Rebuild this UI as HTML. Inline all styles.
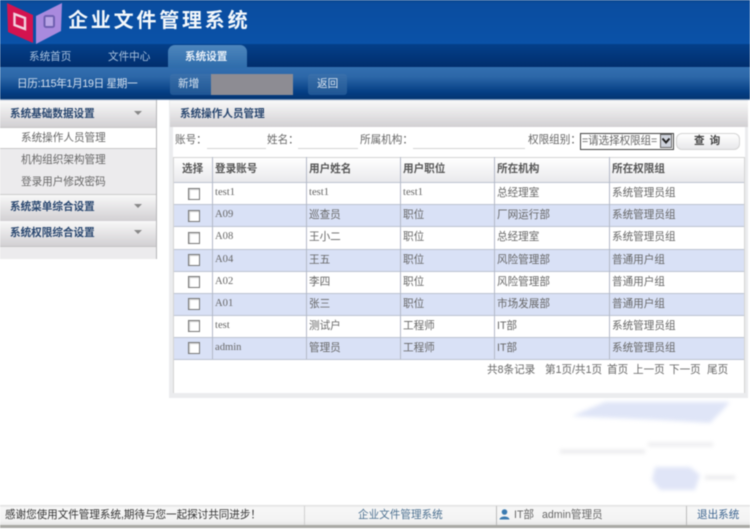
<!DOCTYPE html>
<html lang="zh">
<head>
<meta charset="utf-8">
<style>
html,body{margin:0;padding:0;background:#fff}
#p{position:relative;width:750px;height:530px;overflow:hidden;background:#fff;font-family:"Liberation Sans","Noto Sans CJK SC",sans-serif;font-size:10.6px;color:#666;filter:blur(.5px)}
#p div{position:absolute;white-space:nowrap}
.t{line-height:16px}
.s{font-family:"Liberation Serif","Noto Sans CJK SC",serif}
.hd{background:linear-gradient(#f8f8f8,#d2d0d3);}
.g{color:#28466f;font-weight:bold}
.cb{width:10px;height:10px;border:1px solid #777;background:#fff;box-shadow:inset 1px 1px 1px #ccc}
.r{left:174px;width:571px;height:22px}
.b{background:#d9e1f6}
.line{background:#bcc3d1;height:1px;left:174px;width:571px}
.vl{background:#b4b9c8;width:1px;top:157px;height:202px}
.h{color:#555;font-weight:bold}
</style>
</head>
<body>
<div id="p">
<!-- top header -->
<div style="left:0;top:0;width:750px;height:44px;background:linear-gradient(#0b478f 0,#0a4da0 8%,#0a52a8 100%)"></div>
<div style="left:0;top:44px;width:750px;height:24px;background:linear-gradient(#04408a,#012d6c)"></div>
<div style="left:0;top:67px;width:750px;height:33px;background:linear-gradient(#336fb0 0,#2c67a8 30%,#053f85 75%,#03336f 100%)"></div>
<div style="left:0;top:99px;width:750px;height:1px;background:#6b8bb3"></div>
<svg style="position:absolute;left:0;top:0" width="70" height="46" viewBox="0 0 70 46">
<polygon points="7,3 33,15 33,43 8,32" fill="#d3134f"/>
<polygon points="36,16 62,3 61,31 36,44" fill="#a98ade"/>
<polygon points="14.5,14 25,18 25,29 14.5,25" fill="none" stroke="#f3d2df" stroke-width="2.4"/>
<rect x="44.500" y="16" width="9.500" height="11" rx="1.500" fill="#b9a5e6" stroke="#6f5fb0" stroke-width="2"/>
</svg>
<div class="t" style="left:68px;top:8px;font-size:20px;line-height:26px;letter-spacing:2.8px;color:#f4f8fb;font-weight:bold">企业文件管理系统</div>

<!-- nav tabs -->
<div class="t" style="left:29px;top:49px;color:#a9c2de">系统首页</div>
<div class="t" style="left:108px;top:49px;color:#a9c2de">文件中心</div>
<div style="left:168px;top:45px;width:79px;height:23px;border-radius:7px 7px 0 0;background:linear-gradient(#4e86bd,#2e6cab)"></div>
<div class="t" style="left:185px;top:49px;color:#e8f0f8;font-weight:bold">系统设置</div>

<!-- toolbar -->
<div class="t" style="left:17px;top:76px;color:#d5e1ef;letter-spacing:-.3px">日历:115年1月19日 星期一</div>
<div style="left:170px;top:74px;width:123px;height:21px;border-radius:3px;background:linear-gradient(#3a70ab,#1f5694)"></div>
<div class="t" style="left:178px;top:76px;color:#d9e4f0">新增</div>
<div style="left:211px;top:74px;width:82px;height:21px;background:#8d8c93"></div>
<div style="left:308px;top:74px;width:39px;height:21px;border-radius:3px;background:linear-gradient(#3a70ab,#1f5694)"></div>
<div class="t" style="left:317px;top:76px;color:#d9e4f0">返回</div>

<!-- left panel -->
<div style="left:0;top:100px;width:156px;height:159px;background:#ecebed;border-right:1px solid #b5b5b8"></div>
<div class="hd" style="left:0;top:101px;width:156px;height:26px;border-bottom:1px solid #c4c4c4"></div>
<div class="t g" style="left:10px;top:106px">系统基础数据设置</div>
<div style="left:134px;top:111px;width:0;height:0;border:4px solid transparent;border-top:4px solid #888"></div>
<div style="left:0;top:128px;width:156px;height:20px;background:#fff;border-bottom:1px solid #c8c8c8"></div>
<div class="t" style="left:21px;top:130px">系统操作人员管理</div>
<div class="t" style="left:21px;top:152px">机构组织架构管理</div>
<div class="t" style="left:21px;top:174px">登录用户修改密码</div>
<div class="hd" style="left:0;top:194px;width:156px;height:26px;border-top:1px solid #ccc"></div>
<div class="t g" style="left:10px;top:199px">系统菜单综合设置</div>
<div style="left:134px;top:204px;width:0;height:0;border:4px solid transparent;border-top:4px solid #888"></div>
<div class="hd" style="left:0;top:221px;width:156px;height:25px;border-bottom:1px solid #c4c4c4"></div>
<div class="t g" style="left:10px;top:225px">系统权限综合设置</div>
<div style="left:134px;top:230px;width:0;height:0;border:4px solid transparent;border-top:4px solid #888"></div>

<!-- right panel -->
<div style="left:169px;top:100px;width:579px;height:298px;background:#ebecee"></div>
<div class="hd" style="left:170px;top:101px;width:578px;height:26px"></div>
<div class="t g" style="left:180px;top:106px">系统操作人员管理</div>
<div style="left:173px;top:127px;width:572px;height:266px;background:#fff"></div>

<!-- search -->
<div class="t" style="left:175px;top:132px">账号：</div>
<div style="left:207px;top:148px;width:59px;height:1px;background:#d4d4d4"></div>
<div class="t" style="left:267px;top:132px">姓名：</div>
<div style="left:298px;top:148px;width:60px;height:1px;background:#d4d4d4"></div>
<div class="t" style="left:360px;top:132px">所属机构：</div>
<div style="left:413px;top:148px;width:112px;height:1px;background:#d4d4d4"></div>
<div class="t" style="left:528px;top:132px">权限组别：</div>
<div style="left:580px;top:133px;width:92px;height:15px;border:1px solid #444;background:#fff"></div>
<div class="t" style="left:582px;top:133px;letter-spacing:-.1px">=请选择权限组=</div>
<div style="left:660px;top:134px;width:12px;height:14px;background:#cfd3dc;border:1px solid #666;box-sizing:border-box"></div>
<svg style="position:absolute;left:661px;top:137px" width="10" height="8"><path d="M1.500 1.500L5 5.500L8.500 1.500" fill="none" stroke="#222" stroke-width="2"/></svg>
<div style="left:676px;top:133px;width:62px;height:15px;border:1px solid #d4d4d4;border-radius:6px;background:linear-gradient(#fff,#e8e8ea)"></div>
<div class="t" style="left:694px;top:133px;color:#444;letter-spacing:5px;font-weight:bold">查询</div>

<!-- table -->
<div class="hd" style="left:174px;top:158px;width:571px;height:24px;background:linear-gradient(#fff,#e9e9ec)"></div>
<div class="r b" style="top:205px"></div>
<div class="r b" style="top:250px"></div>
<div class="r b" style="top:294px"></div>
<div class="r b" style="top:338px"></div>
<div class="line" style="top:157px;background:#d4d4d4"></div>
<div class="line" style="top:182px"></div>
<div class="line" style="top:204px"></div>
<div class="line" style="top:226px"></div>
<div class="line" style="top:249px"></div>
<div class="line" style="top:271px"></div>
<div class="line" style="top:293px"></div>
<div class="line" style="top:315px"></div>
<div class="line" style="top:337px"></div>
<div class="line" style="top:359px"></div>
<div class="vl" style="left:173px;background:#d4d4d4;height:236px"></div>
<div class="vl" style="left:212px"></div>
<div class="vl" style="left:306px"></div>
<div class="vl" style="left:400px"></div>
<div class="vl" style="left:494px"></div>
<div class="vl" style="left:609px"></div>
<div class="vl" style="left:744px;background:#d4d4d4;height:236px"></div>

<div class="t h" style="left:182px;top:161px">选择</div>
<div class="t h" style="left:215px;top:161px">登录账号</div>
<div class="t h" style="left:309px;top:161px">用户姓名</div>
<div class="t h" style="left:403px;top:161px">用户职位</div>
<div class="t h" style="left:497px;top:161px">所在机构</div>
<div class="t h" style="left:612px;top:161px">所在权限组</div>

<div class="cb" style="left:188px;top:188px"></div><div class="t s" style="left:215px;top:185px">test1</div><div class="t s" style="left:309px;top:185px">test1</div><div class="t s" style="left:403px;top:185px">test1</div><div class="t" style="left:497px;top:185px">总经理室</div><div class="t" style="left:612px;top:185px">系统管理员组</div>
<div class="cb" style="left:188px;top:210px"></div><div class="t s" style="left:215px;top:207px">A09</div><div class="t" style="left:309px;top:207px">巡查员</div><div class="t" style="left:403px;top:207px">职位</div><div class="t" style="left:497px;top:207px">厂网运行部</div><div class="t" style="left:612px;top:207px">系统管理员组</div>
<div class="cb" style="left:188px;top:232px"></div><div class="t s" style="left:215px;top:229px">A08</div><div class="t" style="left:309px;top:229px">王小二</div><div class="t" style="left:403px;top:229px">职位</div><div class="t" style="left:497px;top:229px">总经理室</div><div class="t" style="left:612px;top:229px">系统管理员组</div>
<div class="cb" style="left:188px;top:254px"></div><div class="t s" style="left:215px;top:252px">A04</div><div class="t" style="left:309px;top:252px">王五</div><div class="t" style="left:403px;top:252px">职位</div><div class="t" style="left:497px;top:252px">风险管理部</div><div class="t" style="left:612px;top:252px">普通用户组</div>
<div class="cb" style="left:188px;top:276px"></div><div class="t s" style="left:215px;top:274px">A02</div><div class="t" style="left:309px;top:274px">李四</div><div class="t" style="left:403px;top:274px">职位</div><div class="t" style="left:497px;top:274px">风险管理部</div><div class="t" style="left:612px;top:274px">普通用户组</div>
<div class="cb" style="left:188px;top:298px"></div><div class="t s" style="left:215px;top:296px">A01</div><div class="t" style="left:309px;top:296px">张三</div><div class="t" style="left:403px;top:296px">职位</div><div class="t" style="left:497px;top:296px">市场发展部</div><div class="t" style="left:612px;top:296px">普通用户组</div>
<div class="cb" style="left:188px;top:320px"></div><div class="t s" style="left:215px;top:318px">test</div><div class="t" style="left:309px;top:318px">测试户</div><div class="t" style="left:403px;top:318px">工程师</div><div class="t" style="left:497px;top:318px">IT部</div><div class="t" style="left:612px;top:318px">系统管理员组</div>
<div class="cb" style="left:188px;top:342px"></div><div class="t s" style="left:215px;top:340px">admin</div><div class="t" style="left:309px;top:340px">管理员</div><div class="t" style="left:403px;top:340px">工程师</div><div class="t" style="left:497px;top:340px">IT部</div><div class="t" style="left:612px;top:340px">系统管理员组</div>

<div class="t" style="left:487px;top:362px">共8条记录</div>
<div class="t" style="left:545px;top:362px">第1页/共1页</div>
<div class="t" style="left:607px;top:362px">首页</div>
<div class="t" style="left:633px;top:362px">上一页</div>
<div class="t" style="left:669px;top:362px">下一页</div>
<div class="t" style="left:707px;top:362px">尾页</div>

<!-- smudges -->
<svg style="position:absolute;left:560px;top:395px;filter:blur(2px)" width="190" height="110">
<polygon points="12,21 45,7 170,7 160,18 150,28 100,25 30,22" fill="#dfe5f7"/>
<rect x="0" y="55" width="85" height="3" fill="#e4e4e7"/>
<rect x="88" y="48" width="65" height="3" fill="#e6e6e9"/>
<polygon points="95,72 130,72 140,80 135,95 100,95 92,85" fill="#e0e5f7"/>
<rect x="145" y="81" width="30" height="3" fill="#e4e4e7"/>
</svg>

<!-- footer -->
<div style="left:0;top:505px;width:750px;height:20px;background:linear-gradient(#dcdcdc 0,#f7f7f7 12%,#f3f3f3 80%,#e4e4e4 100%)"></div>
<div style="left:0;top:525px;width:750px;height:3px;background:#a9a9a5"></div>
<div style="left:304px;top:506px;width:1px;height:19px;background:#d0d0d0"></div>
<div style="left:496px;top:506px;width:1px;height:19px;background:#bcbcbc"></div>
<div style="left:686px;top:506px;width:1px;height:19px;background:#bcbcbc"></div>
<div class="t" style="left:5px;top:507px;color:#333;letter-spacing:-.05px">感谢您使用文件管理系统,期待与您一起探讨共同进步！</div>
<div class="t" style="left:358px;top:507px;color:#4d7191">企业文件管理系统</div>
<svg style="position:absolute;left:499px;top:509px" width="11" height="11"><circle cx="5.500" cy="3" r="2.800" fill="#3a7ab0"/><path d="M.5 10.500C1 6.500 10 6.500 10.500 10.500Z" fill="#3a7ab0"/></svg>
<div class="t" style="left:514px;top:507px">IT部</div>
<div class="t" style="left:542px;top:507px">admin管理员</div>
<div class="t" style="left:697px;top:507px;color:#3d6590">退出系统</div>
</div>
</body>
</html>
